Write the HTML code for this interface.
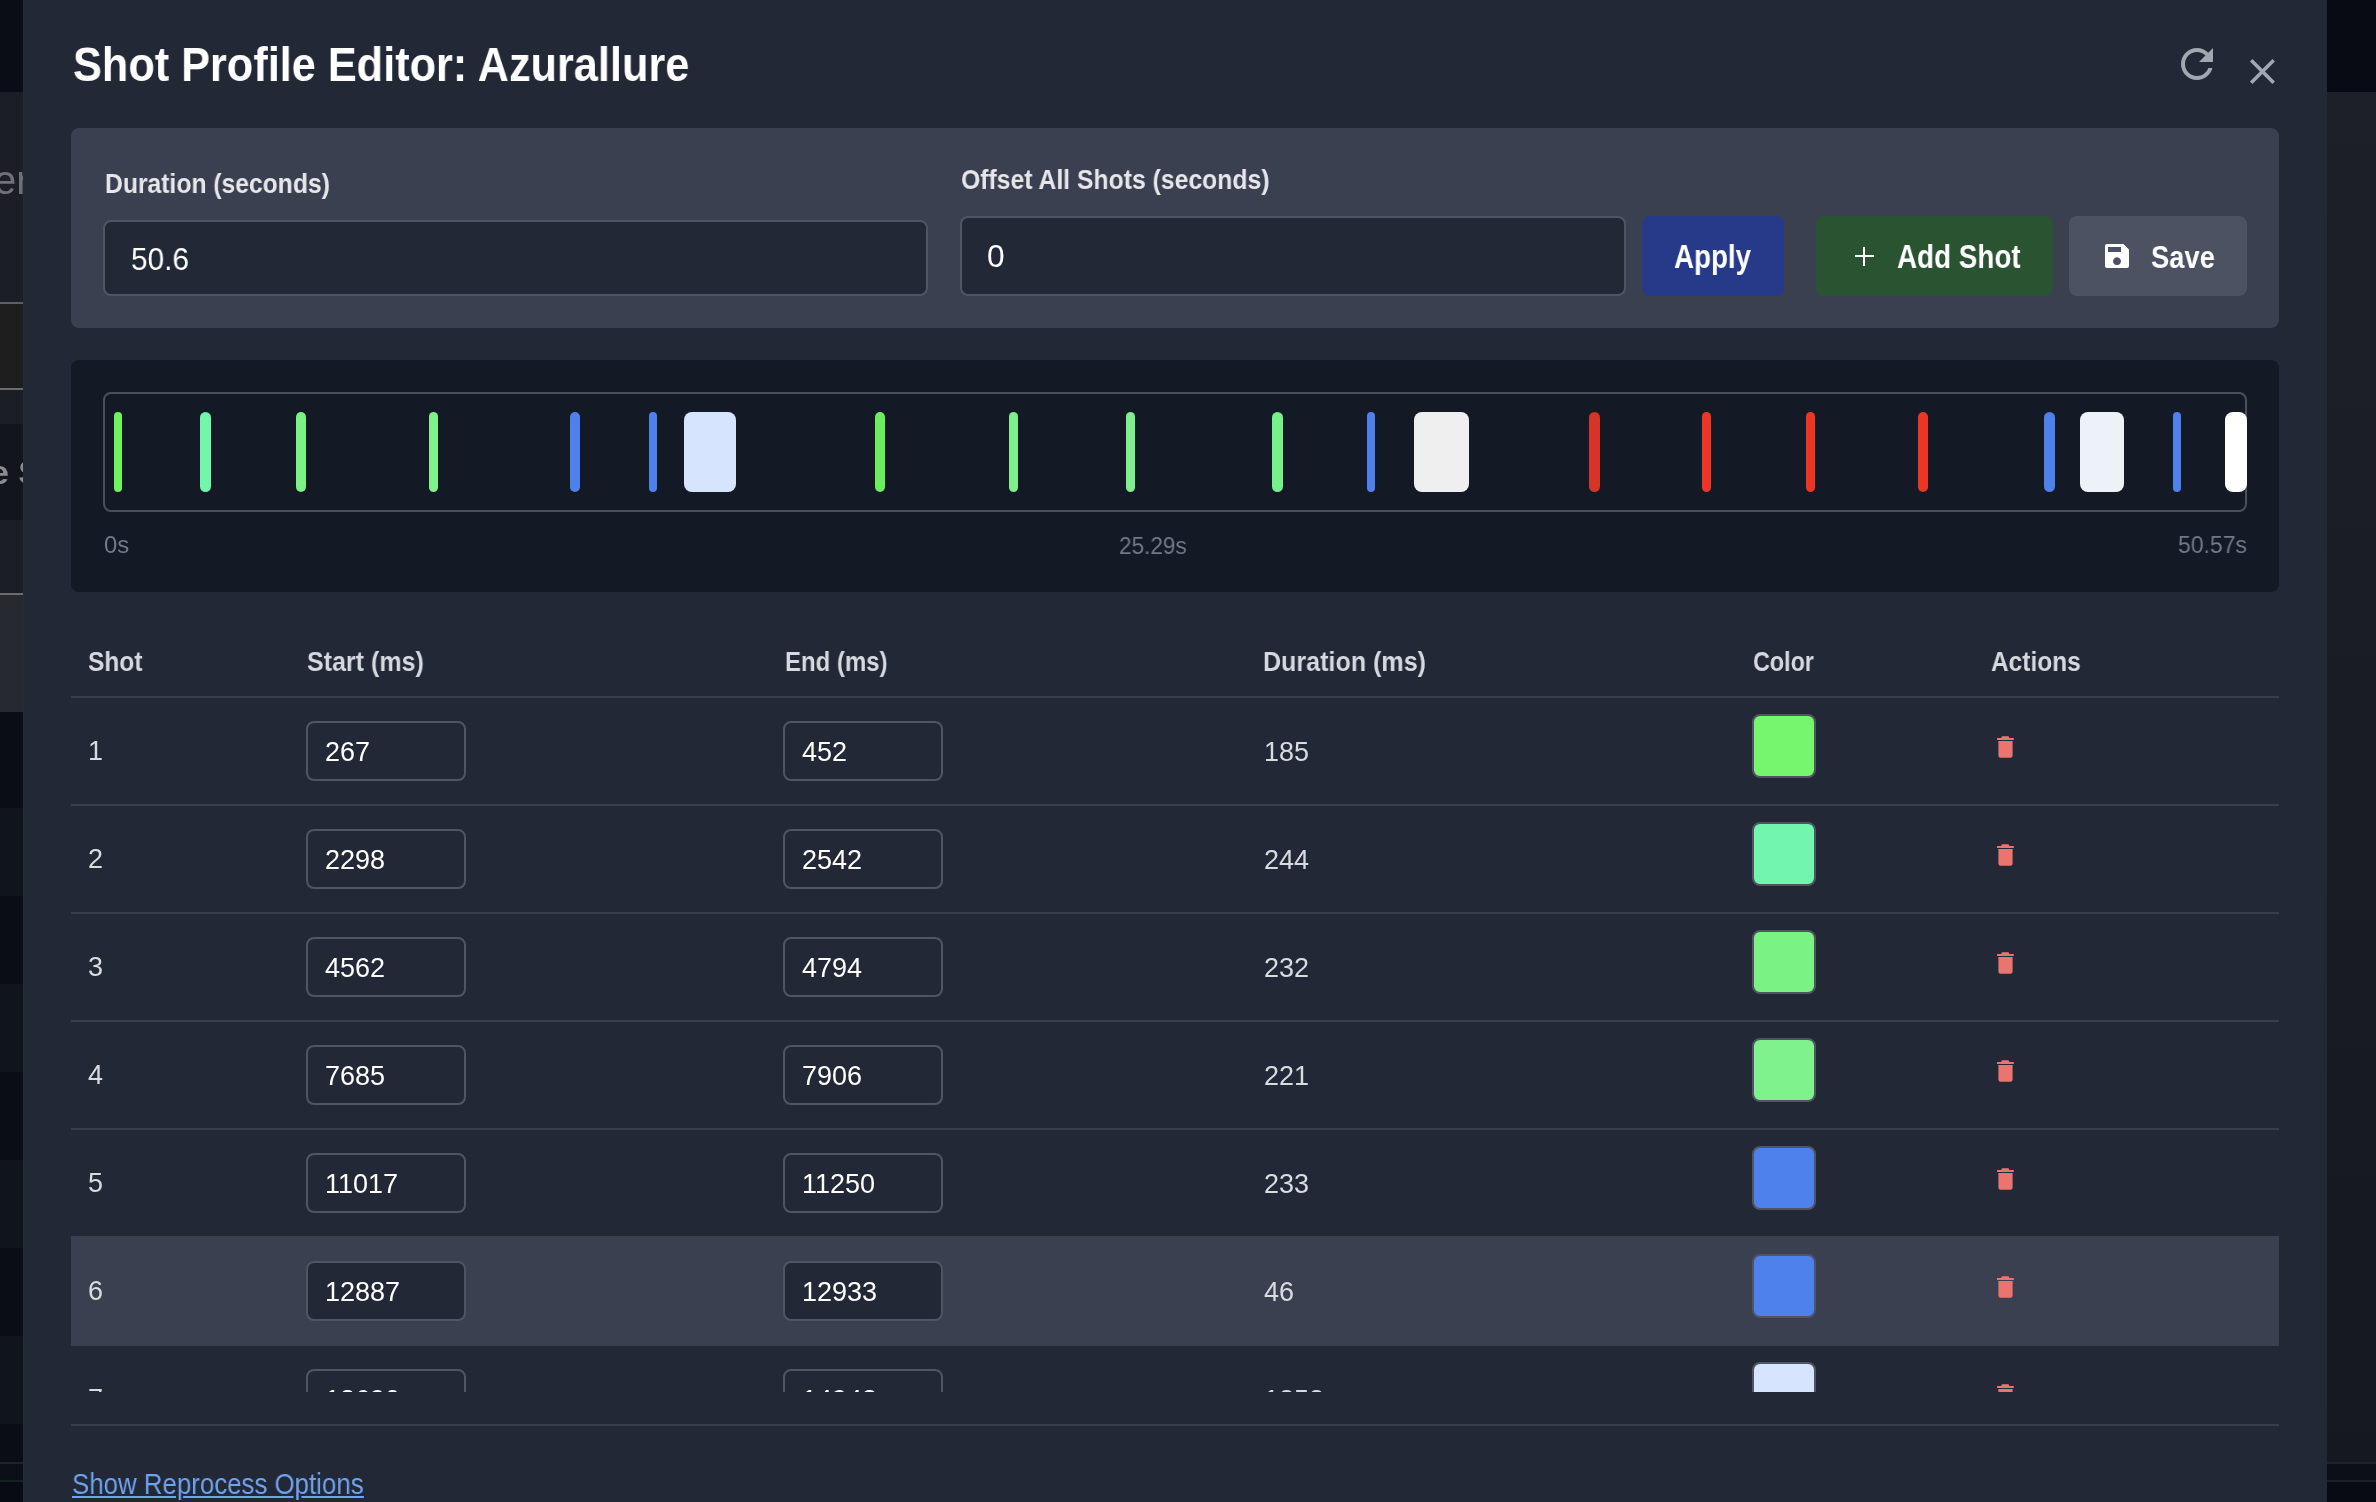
<!DOCTYPE html><html><head><meta charset="utf-8"><style>
*{margin:0;padding:0;box-sizing:border-box}
html,body{width:2376px;height:1502px;overflow:hidden;background:#0a0d15;font-family:"Liberation Sans",sans-serif}
.a{position:absolute}
.t{position:absolute;white-space:nowrap;transform-origin:0 0;will-change:transform}
.b{font-weight:bold}
</style></head><body>

<div class="a" style="left:0;top:0px;width:23px;height:92px;background:#0a0d15"></div>
<div class="a" style="left:0;top:92px;width:23px;height:210px;background:#1b1e25"></div>
<div class="a" style="left:0;top:302px;width:23px;height:2px;background:#5c5f66"></div>
<div class="a" style="left:0;top:304px;width:23px;height:84px;background:#1e1e1f"></div>
<div class="a" style="left:0;top:388px;width:23px;height:2px;background:#6a6c70"></div>
<div class="a" style="left:0;top:390px;width:23px;height:34px;background:#1b1e24"></div>
<div class="a" style="left:0;top:424px;width:23px;height:96px;background:#12151c"></div>
<div class="a" style="left:0;top:520px;width:23px;height:73px;background:#1b1e24"></div>
<div class="a" style="left:0;top:593px;width:23px;height:2px;background:#6a6c70"></div>
<div class="a" style="left:0;top:595px;width:23px;height:117px;background:#26292f"></div>
<div class="a" style="left:0;top:712px;width:23px;height:96px;background:#0a0d15"></div>
<div class="a" style="left:0;top:808px;width:23px;height:88px;background:#10141b"></div>
<div class="a" style="left:0;top:896px;width:23px;height:88px;background:#0a0d15"></div>
<div class="a" style="left:0;top:984px;width:23px;height:88px;background:#10141b"></div>
<div class="a" style="left:0;top:1072px;width:23px;height:88px;background:#0a0d15"></div>
<div class="a" style="left:0;top:1160px;width:23px;height:88px;background:#10141b"></div>
<div class="a" style="left:0;top:1248px;width:23px;height:88px;background:#0a0d15"></div>
<div class="a" style="left:0;top:1336px;width:23px;height:88px;background:#10141b"></div>
<div class="a" style="left:0;top:1424px;width:23px;height:38px;background:#0a0d15"></div>
<div class="a" style="left:0;top:1462px;width:23px;height:2px;background:#1e222a"></div>
<div class="a" style="left:0;top:1464px;width:23px;height:16px;background:#0b0f17"></div>
<div class="a" style="left:0;top:1480px;width:23px;height:2px;background:#16221f"></div>
<div class="a" style="left:0;top:1482px;width:23px;height:20px;background:#080b14"></div>
<div class="t" style="left:-6px;top:160px;font-size:40px;line-height:40px;color:#6f7177">er</div>
<div class="t b" style="left:-10px;top:452px;font-size:34px;line-height:40px;color:#8a8c90">e S</div>
<div class="a" style="left:2327px;top:0px;width:49px;height:92px;background:#080b14"></div>
<div class="a" style="left:2327px;top:1462px;width:49px;height:2px;background:#1e222a"></div>
<div class="a" style="left:2327px;top:1464px;width:49px;height:16px;background:#0b0f17"></div>
<div class="a" style="left:2327px;top:1480px;width:49px;height:2px;background:#1c1f26"></div>
<div class="a" style="left:2327px;top:1482px;width:49px;height:20px;background:#080b14"></div>
<div class="a" style="left:2327px;top:92px;width:49px;height:1370px;background:linear-gradient(#1d2027,#15181f)"></div>
<div class="a" style="left:23px;top:0;width:2304px;height:1502px;background:#222836;border-left:1px solid #232c39"></div>
<div class="t b" style="left:72.60px;top:39.96px;font-size:48.84px;line-height:48.84px;color:#ffffff;font-weight:bold;transform:scaleX(0.8863);">Shot Profile Editor: Azurallure</div>
<svg class="a" style="left:2173px;top:39.7px" width="48" height="48" viewBox="0 0 24 24"><path fill="#a2a7b2" d="M17.65 6.35C16.2 4.9 14.21 4 12 4c-4.42 0-7.99 3.58-7.99 8s3.57 8 7.99 8c3.73 0 6.84-2.55 7.73-6h-2.08c-.82 2.33-3.04 4-5.65 4-3.31 0-6-2.69-6-6s2.69-6 6-6c1.66 0 3.14.69 4.22 1.78L13 11h7V4l-2.35 2.35z"/></svg>
<svg class="a" style="left:2241px;top:49.7px" width="42.86" height="42.86" viewBox="0 0 24 24"><path fill="#a2a7b2" d="M19 6.41L17.59 5 12 10.59 6.41 5 5 6.41 10.59 12 5 17.59 6.41 19 12 13.41 17.59 19 19 17.59 13.41 12z"/></svg>
<div class="a" style="left:71px;top:128px;width:2208px;height:200px;border-radius:8px;background:#3a4050"></div>
<div class="t b" style="left:104.50px;top:170.08px;font-size:27.91px;line-height:27.91px;color:#e6e7eb;font-weight:bold;transform:scaleX(0.8843);">Duration (seconds)</div>
<div class="t b" style="left:960.80px;top:166.40px;font-size:27.76px;line-height:27.76px;color:#e6e7eb;font-weight:bold;transform:scaleX(0.8919);">Offset All Shots (seconds)</div>
<div class="a" style="left:103px;top:220px;width:825px;height:76px;border-radius:8px;background:#222836;border:2px solid #4f5565"></div>
<div class="t" style="left:130.60px;top:243.50px;font-size:31.54px;line-height:31.54px;color:#ffffff;transform:scaleX(0.9459);">50.6</div>
<div class="a" style="left:960px;top:216px;width:666px;height:80px;border-radius:8px;background:#222836;border:2px solid #4f5565"></div>
<div class="t" style="left:986.60px;top:241.48px;font-size:31.69px;line-height:31.69px;color:#ffffff;">0</div>
<div class="a" style="left:1642px;top:216px;width:142px;height:80px;border-radius:8px;background:#263a89"></div>
<div class="t b" style="left:1674.00px;top:240.08px;font-size:33.58px;line-height:33.58px;color:#ffffff;font-weight:bold;transform:scaleX(0.8266);">Apply</div>
<div class="a" style="left:1816px;top:216px;width:237px;height:80px;border-radius:8px;background:#2a5332"></div>
<div class="a" style="left:1854.5px;top:255px;width:19px;height:2.2px;background:#fff"></div>
<div class="a" style="left:1862.9px;top:246.6px;width:2.2px;height:19px;background:#fff"></div>
<div class="t b" style="left:1897.00px;top:240.27px;font-size:32.99px;line-height:32.99px;color:#ffffff;font-weight:bold;transform:scaleX(0.8435);">Add Shot</div>
<div class="a" style="left:2069px;top:216px;width:178px;height:80px;border-radius:8px;background:#4c5262"></div>
<svg class="a" style="left:2105px;top:244px" width="24" height="24" viewBox="0 0 24 24"><path fill="#fff" fill-rule="evenodd" d="M2 0H18.4L24 5.6V22a2 2 0 0 1-2 2H2a2 2 0 0 1-2-2V2a2 2 0 0 1 2-2zM3 3V8H16V3zM12 13.3a3.9 3.9 0 1 0 0.001 0z"/></svg>
<div class="t b" style="left:2150.50px;top:240.89px;font-size:32.27px;line-height:32.27px;color:#ffffff;font-weight:bold;transform:scaleX(0.8467);">Save</div>
<div class="a" style="left:71px;top:360px;width:2208px;height:232px;border-radius:8px;background:#141926"></div>
<div class="a" style="left:103px;top:392px;width:2144px;height:120px;border-radius:8px;border:2px solid #4b505b"></div>
<div class="a" style="left:113.7px;top:412px;width:8.5px;height:80px;border-radius:4.2px;background:#6ef35f"></div>
<div class="a" style="left:199.8px;top:412px;width:11.4px;height:80px;border-radius:5.7px;background:#72f6ae"></div>
<div class="a" style="left:295.9px;top:412px;width:10.3px;height:80px;border-radius:5.2px;background:#7af384"></div>
<div class="a" style="left:428.7px;top:412px;width:9.7px;height:80px;border-radius:4.8px;background:#80f28b"></div>
<div class="a" style="left:569.9px;top:412px;width:10.3px;height:80px;border-radius:5.2px;background:#4f81ed"></div>
<div class="a" style="left:648.7px;top:412px;width:8.4px;height:80px;border-radius:4.2px;background:#4f81ed"></div>
<div class="a" style="left:684.0px;top:412px;width:51.9px;height:80px;border-radius:8.0px;background:#d6e4fd"></div>
<div class="a" style="left:874.8px;top:412px;width:10.1px;height:80px;border-radius:5.1px;background:#6ced5b"></div>
<div class="a" style="left:1008.9px;top:412px;width:9.1px;height:80px;border-radius:4.6px;background:#7bf08c"></div>
<div class="a" style="left:1125.7px;top:412px;width:9.5px;height:80px;border-radius:4.8px;background:#7bf08c"></div>
<div class="a" style="left:1272.0px;top:412px;width:10.9px;height:80px;border-radius:5.5px;background:#78f08a"></div>
<div class="a" style="left:1366.7px;top:412px;width:8.4px;height:80px;border-radius:4.2px;background:#4f81ed"></div>
<div class="a" style="left:1414.0px;top:412px;width:55.2px;height:80px;border-radius:8.0px;background:#efefef"></div>
<div class="a" style="left:1588.9px;top:412px;width:11.1px;height:80px;border-radius:5.5px;background:#d63426"></div>
<div class="a" style="left:1701.8px;top:412px;width:9.3px;height:80px;border-radius:4.6px;background:#eb3625"></div>
<div class="a" style="left:1806.0px;top:412px;width:9.0px;height:80px;border-radius:4.5px;background:#eb3625"></div>
<div class="a" style="left:1918.0px;top:412px;width:10.1px;height:80px;border-radius:5.0px;background:#eb3625"></div>
<div class="a" style="left:2044.0px;top:412px;width:11.0px;height:80px;border-radius:5.5px;background:#4f81ed"></div>
<div class="a" style="left:2080.0px;top:412px;width:44.2px;height:80px;border-radius:8.0px;background:#edf1f8"></div>
<div class="a" style="left:2172.9px;top:412px;width:8.1px;height:80px;border-radius:4.0px;background:#4f81ed"></div>
<div class="a" style="left:2224.7px;top:412px;width:22.3px;height:80px;border-radius:8.0px;background:#ffffff"></div>
<div class="t" style="left:103.80px;top:533.02px;font-size:23.84px;line-height:23.84px;color:#737986;">0s</div>
<div class="t" style="left:1118.70px;top:534.54px;font-size:23.69px;line-height:23.69px;color:#737986;transform:scaleX(0.9521);">25.29s</div>
<div class="t" style="left:2177.80px;top:532.88px;font-size:24.13px;line-height:24.13px;color:#737986;transform:scaleX(0.9528);">50.57s</div>
<div class="t b" style="left:87.60px;top:646.53px;font-size:28.20px;line-height:28.20px;color:#d6d9df;font-weight:bold;transform:scaleX(0.8698);">Shot</div>
<div class="t b" style="left:306.50px;top:646.53px;font-size:28.20px;line-height:28.20px;color:#d6d9df;font-weight:bold;transform:scaleX(0.8879);">Start (ms)</div>
<div class="t b" style="left:785.00px;top:646.53px;font-size:28.20px;line-height:28.20px;color:#d6d9df;font-weight:bold;transform:scaleX(0.8504);">End (ms)</div>
<div class="t b" style="left:1262.50px;top:646.53px;font-size:28.20px;line-height:28.20px;color:#d6d9df;font-weight:bold;transform:scaleX(0.8896);">Duration (ms)</div>
<div class="t b" style="left:1752.90px;top:646.53px;font-size:28.20px;line-height:28.20px;color:#d6d9df;font-weight:bold;transform:scaleX(0.8284);">Color</div>
<div class="t b" style="left:1990.80px;top:646.53px;font-size:28.20px;line-height:28.20px;color:#d6d9df;font-weight:bold;transform:scaleX(0.8680);">Actions</div>
<div class="a" style="left:71px;top:696px;width:2208px;height:2px;background:#383e4b"></div>
<div class="a" style="left:71px;top:698px;width:2208px;height:694px;overflow:hidden">
<div class="a" style="left:0;top:106px;width:2208px;height:2px;background:#383e4b"></div>
<div class="t" style="left:17.40px;top:40.34px;font-size:27.00px;line-height:27.00px;color:#d8dbe0;">1</div>
<div class="a" style="left:235px;top:23px;width:160px;height:60px;border-radius:8px;background:#222836;border:2px solid #4f5565"></div>
<div class="t" style="left:253.90px;top:40.54px;font-size:27.00px;line-height:27.00px;color:#ffffff;">267</div>
<div class="a" style="left:712px;top:23px;width:160px;height:60px;border-radius:8px;background:#222836;border:2px solid #4f5565"></div>
<div class="t" style="left:731.00px;top:40.54px;font-size:27.00px;line-height:27.00px;color:#ffffff;">452</div>
<div class="t" style="left:1193.00px;top:40.54px;font-size:27.00px;line-height:27.00px;color:#d8dbe0;">185</div>
<div class="a" style="left:1681px;top:16px;width:64px;height:64px;border-radius:8px;background:#76f56e;border:2px solid #4f5565"></div>
<svg class="a" style="left:1925.5px;top:38px" width="17" height="22" viewBox="0 0 17 22"><path fill="#e9756e" d="M4.2 2 L5 0.2 H11.6 L12.4 2 H16.8 V4 H0 V2 Z M1.4 5 H15.6 V19.6 A2.2 2.2 0 0 1 13.4 21.8 H3.6 A2.2 2.2 0 0 1 1.4 19.6 Z"/></svg>
<div class="a" style="left:0;top:214px;width:2208px;height:2px;background:#383e4b"></div>
<div class="t" style="left:17.40px;top:148.34px;font-size:27.00px;line-height:27.00px;color:#d8dbe0;">2</div>
<div class="a" style="left:235px;top:131px;width:160px;height:60px;border-radius:8px;background:#222836;border:2px solid #4f5565"></div>
<div class="t" style="left:253.90px;top:148.54px;font-size:27.00px;line-height:27.00px;color:#ffffff;">2298</div>
<div class="a" style="left:712px;top:131px;width:160px;height:60px;border-radius:8px;background:#222836;border:2px solid #4f5565"></div>
<div class="t" style="left:731.00px;top:148.54px;font-size:27.00px;line-height:27.00px;color:#ffffff;">2542</div>
<div class="t" style="left:1193.00px;top:148.54px;font-size:27.00px;line-height:27.00px;color:#d8dbe0;">244</div>
<div class="a" style="left:1681px;top:124px;width:64px;height:64px;border-radius:8px;background:#72f6ae;border:2px solid #4f5565"></div>
<svg class="a" style="left:1925.5px;top:146px" width="17" height="22" viewBox="0 0 17 22"><path fill="#e9756e" d="M4.2 2 L5 0.2 H11.6 L12.4 2 H16.8 V4 H0 V2 Z M1.4 5 H15.6 V19.6 A2.2 2.2 0 0 1 13.4 21.8 H3.6 A2.2 2.2 0 0 1 1.4 19.6 Z"/></svg>
<div class="a" style="left:0;top:322px;width:2208px;height:2px;background:#383e4b"></div>
<div class="t" style="left:17.40px;top:256.34px;font-size:27.00px;line-height:27.00px;color:#d8dbe0;">3</div>
<div class="a" style="left:235px;top:239px;width:160px;height:60px;border-radius:8px;background:#222836;border:2px solid #4f5565"></div>
<div class="t" style="left:253.90px;top:256.54px;font-size:27.00px;line-height:27.00px;color:#ffffff;">4562</div>
<div class="a" style="left:712px;top:239px;width:160px;height:60px;border-radius:8px;background:#222836;border:2px solid #4f5565"></div>
<div class="t" style="left:731.00px;top:256.54px;font-size:27.00px;line-height:27.00px;color:#ffffff;">4794</div>
<div class="t" style="left:1193.00px;top:256.54px;font-size:27.00px;line-height:27.00px;color:#d8dbe0;">232</div>
<div class="a" style="left:1681px;top:232px;width:64px;height:64px;border-radius:8px;background:#7af384;border:2px solid #4f5565"></div>
<svg class="a" style="left:1925.5px;top:254px" width="17" height="22" viewBox="0 0 17 22"><path fill="#e9756e" d="M4.2 2 L5 0.2 H11.6 L12.4 2 H16.8 V4 H0 V2 Z M1.4 5 H15.6 V19.6 A2.2 2.2 0 0 1 13.4 21.8 H3.6 A2.2 2.2 0 0 1 1.4 19.6 Z"/></svg>
<div class="a" style="left:0;top:430px;width:2208px;height:2px;background:#383e4b"></div>
<div class="t" style="left:17.40px;top:364.34px;font-size:27.00px;line-height:27.00px;color:#d8dbe0;">4</div>
<div class="a" style="left:235px;top:347px;width:160px;height:60px;border-radius:8px;background:#222836;border:2px solid #4f5565"></div>
<div class="t" style="left:253.90px;top:364.54px;font-size:27.00px;line-height:27.00px;color:#ffffff;">7685</div>
<div class="a" style="left:712px;top:347px;width:160px;height:60px;border-radius:8px;background:#222836;border:2px solid #4f5565"></div>
<div class="t" style="left:731.00px;top:364.54px;font-size:27.00px;line-height:27.00px;color:#ffffff;">7906</div>
<div class="t" style="left:1193.00px;top:364.54px;font-size:27.00px;line-height:27.00px;color:#d8dbe0;">221</div>
<div class="a" style="left:1681px;top:340px;width:64px;height:64px;border-radius:8px;background:#80f28b;border:2px solid #4f5565"></div>
<svg class="a" style="left:1925.5px;top:362px" width="17" height="22" viewBox="0 0 17 22"><path fill="#e9756e" d="M4.2 2 L5 0.2 H11.6 L12.4 2 H16.8 V4 H0 V2 Z M1.4 5 H15.6 V19.6 A2.2 2.2 0 0 1 13.4 21.8 H3.6 A2.2 2.2 0 0 1 1.4 19.6 Z"/></svg>
<div class="a" style="left:0;top:538px;width:2208px;height:2px;background:#383e4b"></div>
<div class="t" style="left:17.40px;top:472.34px;font-size:27.00px;line-height:27.00px;color:#d8dbe0;">5</div>
<div class="a" style="left:235px;top:455px;width:160px;height:60px;border-radius:8px;background:#222836;border:2px solid #4f5565"></div>
<div class="t" style="left:253.90px;top:472.54px;font-size:27.00px;line-height:27.00px;color:#ffffff;">11017</div>
<div class="a" style="left:712px;top:455px;width:160px;height:60px;border-radius:8px;background:#222836;border:2px solid #4f5565"></div>
<div class="t" style="left:731.00px;top:472.54px;font-size:27.00px;line-height:27.00px;color:#ffffff;">11250</div>
<div class="t" style="left:1193.00px;top:472.54px;font-size:27.00px;line-height:27.00px;color:#d8dbe0;">233</div>
<div class="a" style="left:1681px;top:448px;width:64px;height:64px;border-radius:8px;background:#4f81ed;border:2px solid #4f5565"></div>
<svg class="a" style="left:1925.5px;top:470px" width="17" height="22" viewBox="0 0 17 22"><path fill="#e9756e" d="M4.2 2 L5 0.2 H11.6 L12.4 2 H16.8 V4 H0 V2 Z M1.4 5 H15.6 V19.6 A2.2 2.2 0 0 1 13.4 21.8 H3.6 A2.2 2.2 0 0 1 1.4 19.6 Z"/></svg>
<div class="a" style="left:0;top:538px;width:2208px;height:110px;background:#3a4050"></div>
<div class="t" style="left:17.40px;top:580.34px;font-size:27.00px;line-height:27.00px;color:#d8dbe0;">6</div>
<div class="a" style="left:235px;top:563px;width:160px;height:60px;border-radius:8px;background:#222836;border:2px solid #4f5565"></div>
<div class="t" style="left:253.90px;top:580.54px;font-size:27.00px;line-height:27.00px;color:#ffffff;">12887</div>
<div class="a" style="left:712px;top:563px;width:160px;height:60px;border-radius:8px;background:#222836;border:2px solid #4f5565"></div>
<div class="t" style="left:731.00px;top:580.54px;font-size:27.00px;line-height:27.00px;color:#ffffff;">12933</div>
<div class="t" style="left:1193.00px;top:580.54px;font-size:27.00px;line-height:27.00px;color:#d8dbe0;">46</div>
<div class="a" style="left:1681px;top:556px;width:64px;height:64px;border-radius:8px;background:#4f81ed;border:2px solid #4f5565"></div>
<svg class="a" style="left:1925.5px;top:578px" width="17" height="22" viewBox="0 0 17 22"><path fill="#e9756e" d="M4.2 2 L5 0.2 H11.6 L12.4 2 H16.8 V4 H0 V2 Z M1.4 5 H15.6 V19.6 A2.2 2.2 0 0 1 13.4 21.8 H3.6 A2.2 2.2 0 0 1 1.4 19.6 Z"/></svg>
<div class="a" style="left:0;top:754px;width:2208px;height:2px;background:#383e4b"></div>
<div class="t" style="left:17.40px;top:688.34px;font-size:27.00px;line-height:27.00px;color:#d8dbe0;">7</div>
<div class="a" style="left:235px;top:671px;width:160px;height:60px;border-radius:8px;background:#222836;border:2px solid #4f5565"></div>
<div class="t" style="left:253.90px;top:688.54px;font-size:27.00px;line-height:27.00px;color:#ffffff;">13690</div>
<div class="a" style="left:712px;top:671px;width:160px;height:60px;border-radius:8px;background:#222836;border:2px solid #4f5565"></div>
<div class="t" style="left:731.00px;top:688.54px;font-size:27.00px;line-height:27.00px;color:#ffffff;">14943</div>
<div class="t" style="left:1193.00px;top:688.54px;font-size:27.00px;line-height:27.00px;color:#d8dbe0;">1253</div>
<div class="a" style="left:1681px;top:664px;width:64px;height:64px;border-radius:8px;background:#d6e4fd;border:2px solid #4f5565"></div>
<svg class="a" style="left:1925.5px;top:686px" width="17" height="22" viewBox="0 0 17 22"><path fill="#e9756e" d="M4.2 2 L5 0.2 H11.6 L12.4 2 H16.8 V4 H0 V2 Z M1.4 5 H15.6 V19.6 A2.2 2.2 0 0 1 13.4 21.8 H3.6 A2.2 2.2 0 0 1 1.4 19.6 Z"/></svg>
</div>
<div class="a" style="left:71px;top:1424px;width:2208px;height:2px;background:#383e4b"></div>
<div class="t" style="left:71.70px;top:1469.79px;font-size:29.07px;line-height:29.07px;color:#6fa3ee;transform:scaleX(0.8893);text-decoration:underline;text-underline-offset:2px;">Show Reprocess Options</div>
</body></html>
